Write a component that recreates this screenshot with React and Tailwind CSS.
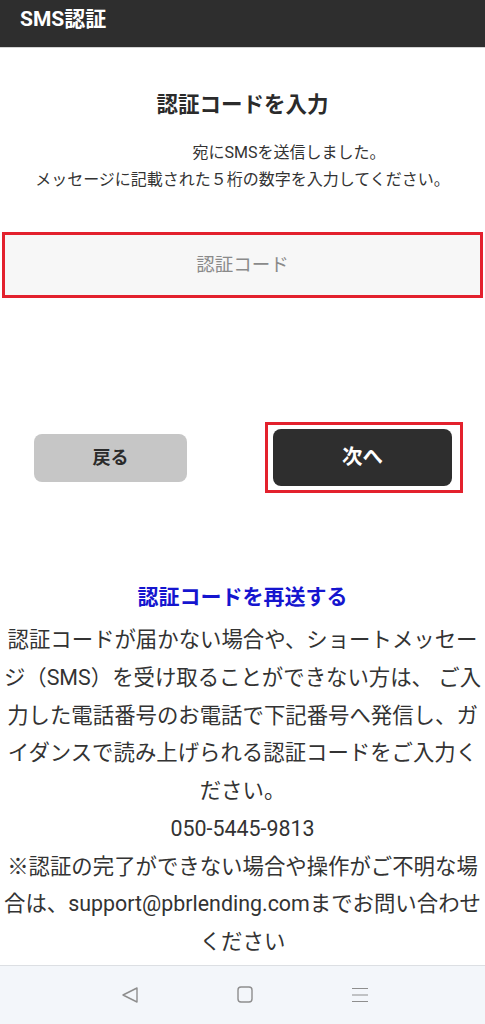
import React, { useState } from "react";

const font = { fontFamily: 'Roboto, "Noto Sans CJK JP", sans-serif' };

const App = () => {
  const [code, setCode] = useState("");

  return (
    <div className="w-full min-h-screen bg-white flex flex-col font-['Roboto','Noto_Sans_CJK_JP',sans-serif]" style={font}>
      {/* header */}
      <div className="h-[48px] bg-[#2e2e2e] border-b border-[#d4d4d4] pl-[20px] pt-[4px]">
        <h1 className="text-white text-[21px] font-bold leading-[30px]">SMS認証</h1>
      </div>

      <h2 className="mt-[42px] text-center text-[21.5px] font-bold leading-[30px] text-[#2b2b2b]">
        認証コードを入力
      </h2>

      <div className="mt-[19px] text-center text-[16px] leading-[27px] text-[#333]">
        <p>
          <span className="inline-block w-[93px]"></span>宛にSMSを送信しました。
        </p>
        <p>メッセージに記載された５桁の数字を入力してください。</p>
      </div>

      <div className="mt-[39px] mx-[2px] h-[66px] border-[3px] border-[#e3212d] bg-[#f7f7f7]">
        <input
          className="w-full h-full bg-transparent text-center text-[18.5px] text-[#333] placeholder:text-[#8a8a8a] outline-none"
          type="tel"
          placeholder="認証コード"
          value={code}
          onChange={(e) => setCode(e.target.value)}
        />
      </div>

      {/* buttons */}
      <div className="mt-[124px] h-[71px] flex items-center justify-between pl-[34px] pr-[22px]">
        <button className="w-[153px] h-[48px] rounded-lg bg-[#c6c6c6] text-[18px] font-bold text-[#2b2b2b]">
          戻る
        </button>
        <div className="h-[71px] border-[3px] border-[#e3212d] pl-[5px] pr-[8px] flex items-center">
          <button className="w-[179px] h-[57px] rounded-lg bg-[#2e2e2e] text-[20.5px] font-bold text-white">
            次へ
          </button>
        </div>
      </div>

      <a href="#" className="mt-[89px] block text-center text-[21px] font-bold leading-[30px] text-[#1515cf]">
        認証コードを再送する
      </a>

      <div className="mt-[9px] text-center text-[21.4px] leading-[37.75px] text-[#333] whitespace-nowrap">
        <p>
          認証コードが届かない場合や、ショートメッセー
          <br />
          ジ（SMS）を受け取ることができない方は、 ご入
          <br />
          力した電話番号のお電話で下記番号へ発信し、ガ
          <br />
          イダンスで読み上げられる認証コードをご入力く
          <br />
          ださい。
        </p>
        <p>050-5445-9813</p>
        <p>
          ※認証の完了ができない場合や操作がご不明な場
          <br />
          合は、support@pbrlending.comまでお問い合わせ
          <br />
          ください
        </p>
      </div>

      {/* android nav bar */}
      <div className="mt-[4px] h-[59px] border-t border-[#dcdfe3] bg-[#f3f6fa] flex items-center justify-center gap-[99px] pl-[5px]">
        <svg width="16" height="16" viewBox="0 0 16 16" fill="none" stroke="#8e8e8e" strokeWidth="1.4" strokeLinejoin="round">
          <path d="M15 1 L1 8 L15 15 Z" />
        </svg>
        <svg width="16" height="17" viewBox="0 0 16 17" fill="none" stroke="#8e8e8e" strokeWidth="1.4">
          <rect x="1" y="1" width="14" height="15" rx="3" />
        </svg>
        <svg width="16" height="16" viewBox="0 0 16 16" fill="none" stroke="#8e8e8e" strokeWidth="1.2">
          <path d="M0 1.5 H16 M0 8 H16 M0 14.5 H16" />
        </svg>
      </div>
    </div>
  );
};

export default App;
